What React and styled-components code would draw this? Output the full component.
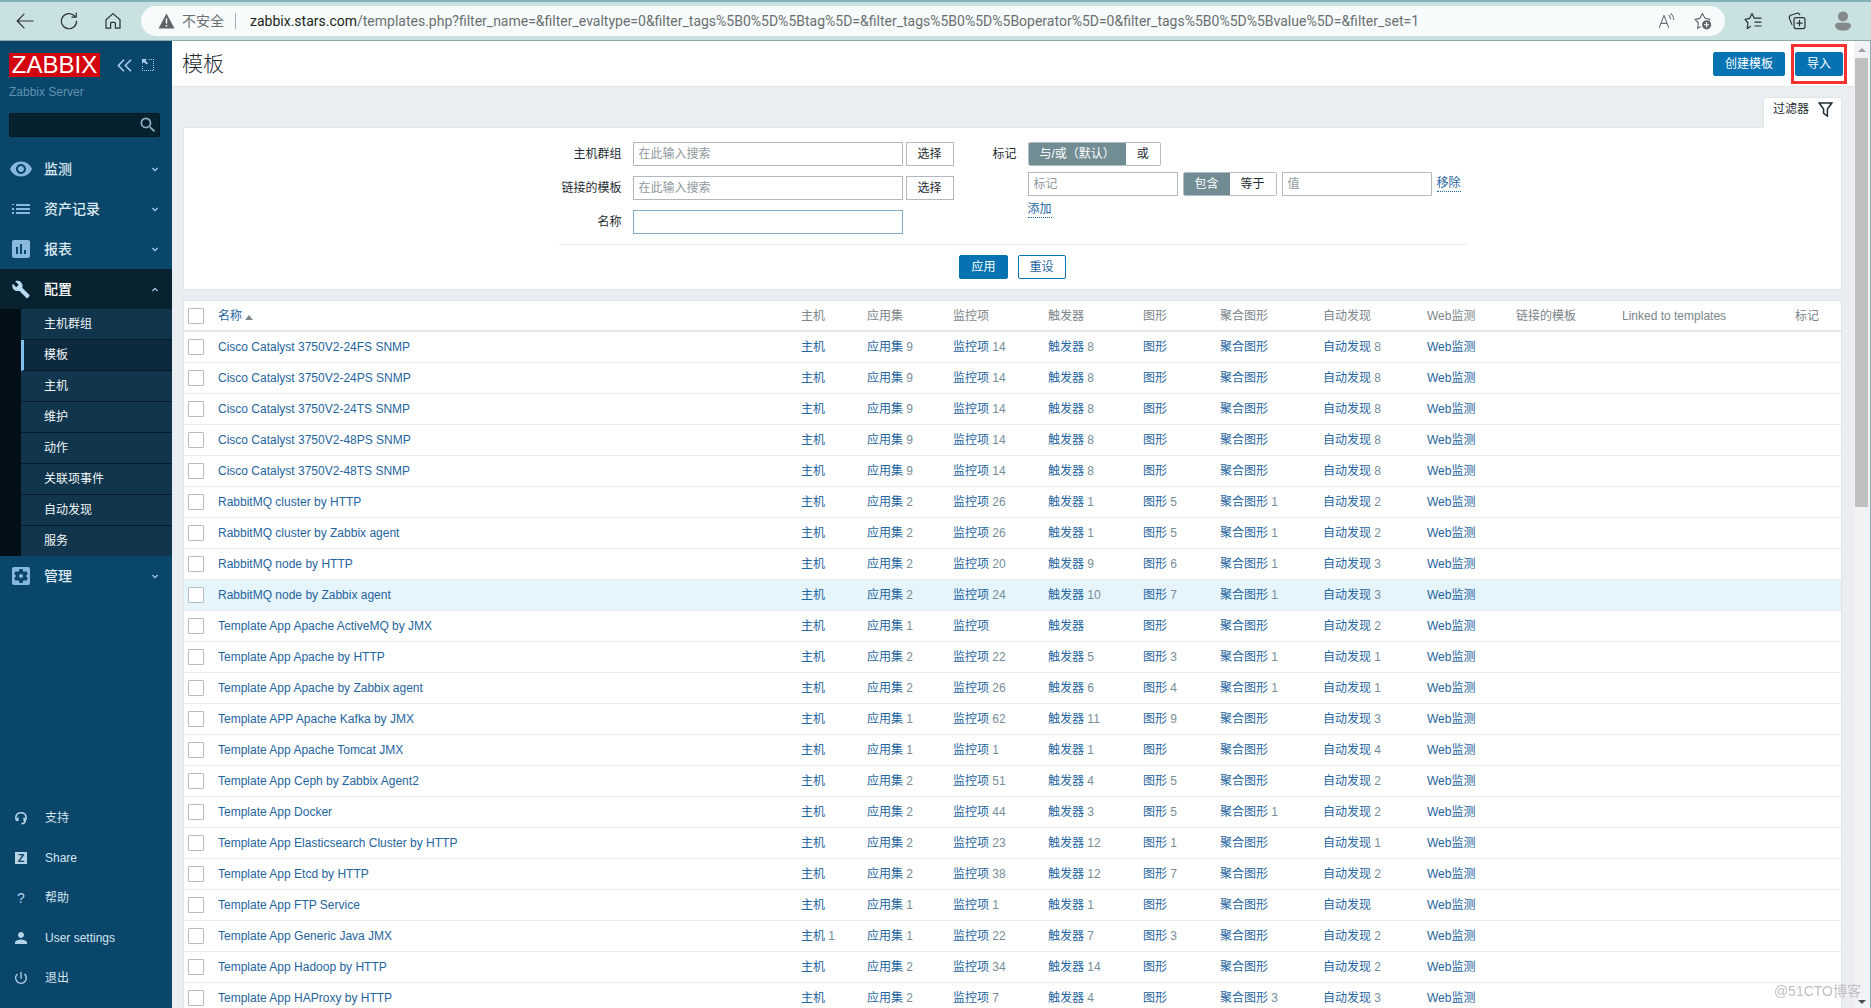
import React from "react";
import styled, { createGlobalStyle } from "styled-components";
import {
  MdVisibility,
  MdAssessment,
  MdBuild,
  MdSettingsApplications,
  MdSearch,
  MdPerson,
  MdPowerSettingsNew,
} from "react-icons/md";

const UI_FONT = `"Liberation Sans", "Noto Sans CJK SC", sans-serif`;

const GlobalStyle = createGlobalStyle`
  *, *::before, *::after { box-sizing: border-box; }
  body {
    margin: 0;
    overflow: hidden;
    background: #ebeef0;
    color: #1f2c33;
    font: 12px/16px ${UI_FONT};
  }
  button, input { font: inherit; color: inherit; margin: 0; }
  a { color: #1f65a0; text-decoration: none; }
`;

/* ---------- window ---------- */

const Window = styled.div`
  display: flex;
  flex-direction: column;
  height: 100vh;
`;

const BrowserBar = styled.header`
  flex: none;
  display: flex;
  align-items: center;
  height: 41px;
  padding: 0 19px 0 16px;
  border-top: 2px solid #82b1b8;
  border-bottom: 1px solid #8da9ab;
  background: #cae1e2;
`;

const BarButton = styled.button`
  flex: none;
  display: flex;
  align-items: center;
  justify-content: center;
  width: 18px;
  height: 18px;
  margin-right: ${(p) => p.$gap || 0}px;
  padding: 0;
  border: 0;
  background: none;
  color: ${(p) => p.$color || "#2a3133"};
`;

const AddressField = styled.div`
  flex: 1;
  min-width: 0;
  display: flex;
  align-items: center;
  height: 30px;
  margin-right: 19px;
  padding: 0 13px 0 17px;
  border-radius: 15px;
  background: #f7fbfb;
  color: #6a7072;
`;

const Insecure = styled.span`
  display: flex;
  align-items: center;
  gap: 7px;
  padding-right: 11px;
  border-right: 1px solid #a4abad;
  font-size: 14px;
  line-height: 16px;
  white-space: nowrap;
`;

const Url = styled.div`
  flex: 1;
  min-width: 0;
  overflow: hidden;
  padding-left: 14px;
  font: 14px/20px Roboto, "Noto Sans", sans-serif;
  white-space: nowrap;

  b {
    font-weight: 400;
    color: #1c1f20;
  }
`;

const Body = styled.div`
  flex: 1;
  min-height: 0;
  display: flex;
  border-right: 1px solid #8db7bd;
`;

/* ---------- sidebar ---------- */

const Sidebar = styled.aside`
  flex: none;
  display: flex;
  flex-direction: column;
  width: 172px;
  background: #0a466a;
  color: #e4edf3;
`;

const Brand = styled.div`
  display: flex;
  align-items: center;
  padding: 12px 18px 0 9px;
  color: #a9cfea;
`;

const Logo = styled.a`
  width: 91px;
  height: 24px;
  margin-right: 17px;
  background: #d30610;
  color: #fff;
  font-size: 24px;
  line-height: 24px;
  text-align: center;
`;

const IconButton = styled.button`
  display: flex;
  padding: 0;
  border: 0;
  background: none;
  color: inherit;
  margin-left: ${(p) => (p.$push ? "auto" : 0)};
`;

const ServerName = styled.div`
  padding: 7px 9px 0;
  color: #5f93b3;
`;

const SearchBox = styled.form`
  display: flex;
  align-items: center;
  height: 24px;
  margin: 13px 12px 12px 9px;
  padding-right: 1px;
  border: 1px solid #04161f;
  border-radius: 2px;
  background: #06222f;
  color: #8fb0c2;

  input {
    flex: 1;
    min-width: 0;
    height: 22px;
    padding: 0 5px;
    border: 0;
    background: none;
    outline: 0;
  }
`;

const MenuLink = styled.a`
  display: flex;
  align-items: center;
  height: 40px;
  padding: 0 14px 0 9px;
  background: ${(p) => (p.$open ? "#08222f" : "none")};
  color: ${(p) => (p.$open ? "#ffffff" : "#dbe9f2")};
  font-size: 14px;
  line-height: 20px;
  font-weight: 500;

  > :first-child {
    flex: none;
    width: 24px;
    height: ${(p) => p.$icon || 24}px;
    margin-right: 11px;
    color: ${(p) => (p.$open ? "#b9dcf3" : "#88b9dc")};
  }
  > :last-child {
    margin-left: auto;
  }
`;

const SubMenu = styled.nav`
  padding-left: 21px;
  background: #020f17;
`;

const SubLink = styled.a`
  display: flex;
  align-items: center;
  height: 31px;
  padding-left: ${(p) => (p.$selected ? 20 : 23)}px;
  border-left: ${(p) => (p.$selected ? "3px solid #7ec0ee" : "0")};
  border-bottom: 1px solid #041b29;
  background: ${(p) => (p.$selected ? "#0d293d" : "#11354c")};
  color: #f0f5f8;

  &:last-child {
    height: 30px;
    border-bottom: 0;
  }
`;

const FooterMenu = styled.nav`
  margin-top: auto;
  padding-bottom: 10px;
`;

const FooterLink = styled.a`
  display: flex;
  align-items: center;
  gap: 15px;
  height: 40px;
  padding-left: 12px;
  color: #d3e4ef;
`;

const FooterIcon = styled.span`
  display: flex;
  align-items: center;
  justify-content: center;
  width: 18px;
  height: 18px;
  color: #b4d3e8;
  font-size: 14px;
`;

const ShareMark = styled.span`
  width: 12px;
  height: 12px;
  background: #b4d3e8;
  color: #0a466a;
  font-size: 11px;
  line-height: 12px;
  font-weight: 700;
  text-align: center;
`;

/* ---------- main ---------- */

const Main = styled.main`
  flex: 1;
  min-width: 0;
  overflow: hidden;
`;

const PageHeader = styled.div`
  display: flex;
  align-items: center;
  gap: 10px;
  height: 46px;
  padding: 0 11px 0 10px;
  border-bottom: 1px solid #e0e5e8;
  background: #fff;
`;

const Title = styled.h1`
  flex: 1;
  margin: 0;
  font-size: 21px;
  line-height: 28px;
  font-weight: 300;
`;

const Button = styled.button`
  position: relative;
  height: 24px;
  padding: 0 11px;
  border: 1px solid #0573b2;
  border-radius: 2px;
  background: ${(p) => (p.$outline ? "#fff" : "#0573b2")};
  color: ${(p) => (p.$outline ? "#1f65a0" : "#fff")};
  line-height: 22px;
`;

const Highlight = styled.span`
  position: absolute;
  inset: -9px -5px;
  border: 3px solid #f8312f;
  pointer-events: none;
`;

const FilterTabs = styled.div`
  display: flex;
  justify-content: flex-end;
  padding: 10px 12px 0;
`;

const FilterTab = styled.button`
  position: relative;
  display: flex;
  align-items: center;
  gap: 9px;
  height: 31px;
  margin-bottom: -1px;
  padding: 0 8px 8px 9px;
  border: 1px solid #dfe4e7;
  border-bottom: 0;
  background: #fff;
`;

const FilterPanel = styled.form`
  display: flex;
  flex-direction: column;
  align-items: center;
  margin: 0 12px 10px 11px;
  padding: 14px 0 10px;
  border: 1px solid #dfe4e7;
  background: #fff;
`;

const FilterBody = styled.div`
  display: flex;
  justify-content: space-between;
  width: 908px;
  padding-bottom: 10px;
  border-bottom: 1px solid #e6eaed;
`;

const FieldGrid = styled.div`
  display: grid;
  grid-template-columns: ${(p) => p.$cols};
  column-gap: 11px;
  row-gap: ${(p) => p.$rowGap}px;
  align-content: start;
`;

const FieldLabel = styled.label`
  line-height: 24px;
  text-align: right;
`;

const Controls = styled.div`
  display: flex;
  align-items: center;
  gap: ${(p) => p.$gap || 3}px;
  height: ${(p) => p.$h || 24}px;
`;

const TextInput = styled.input`
  width: ${(p) => p.$w}px;
  height: 24px;
  padding: 0 5px;
  border: 1px solid ${(p) => (p.$focus ? "#7fa9c4" : "#afb9be")};
  background: #fff;
  outline: 0;

  &::placeholder {
    color: #8f999e;
    opacity: 1;
  }
`;

const SelectButton = styled.button`
  width: 48px;
  height: 24px;
  padding: 0;
  border: 1px solid #afb9be;
  background: #fff;
  line-height: 22px;
`;

const Segments = styled.div`
  display: flex;
  height: 24px;
  border: 1px solid #b4bfc4;
  border-radius: 2px;
  overflow: hidden;
`;

const Segment = styled.label`
  padding: 0 11px;
  background: ${(p) => (p.$on ? "#728c93" : "#fff")};
  color: ${(p) => (p.$on ? "#fff" : "#1f2c33")};
  line-height: 22px;
  white-space: nowrap;

  input {
    position: absolute;
    opacity: 0;
    pointer-events: none;
  }
`;

const DottedLink = styled.a`
  border-bottom: 1px dotted #1f65a0;
  line-height: 15px;
`;

const FilterActions = styled.div`
  display: flex;
  gap: 10px;
  padding-top: 10px;
`;

/* ---------- table ---------- */

const TableFrame = styled.div`
  margin: 0 12px 0 11px;
  border: 1px solid #dfe4e7;
  background: #fff;
`;

const DataTable = styled.table`
  width: 100%;
  border-collapse: separate;
  border-spacing: 0;
  table-layout: fixed;

  th,
  td {
    padding: 0 5px;
    text-align: left;
    white-space: nowrap;
    font-weight: 400;
    vertical-align: middle;
  }
  th {
    height: 31px;
    border-bottom: 2px solid #e3e8ea;
    color: #7b858a;
  }
  td {
    height: 31px;
    border-bottom: 1px solid #ebeef0;
    color: #768d99;
  }
  th:first-child,
  td:first-child {
    padding: 0 0 0 4px;
  }
`;

const Row = styled.tr`
  background: ${(p) => (p.$hover ? "#e6f4fb" : "#fff")};
`;

const Tick = styled.input`
  appearance: none;
  display: block;
  width: 16px;
  height: 16px;
  margin: 0;
  border: 1px solid #b3bcc1;
  border-radius: 1px;
  background: #fff;
`;

const SortArrow = styled.span`
  display: inline-block;
  margin-left: 3px;
  border: 4px solid transparent;
  border-top: 0;
  border-bottom: 5px solid #7b858a;
`;

/* ---------- scroll bar, watermark ---------- */

const ScrollTrack = styled.div`
  flex: none;
  display: flex;
  flex-direction: column;
  align-items: center;
  width: 16px;
  padding: 7px 2px 4px 1px;
  background: #f0f2f4;
`;

const ScrollArrow = styled.span`
  border: 4px solid transparent;
  border-top: ${(p) => (p.$down ? "4px solid #4a4f52" : "0")};
  border-bottom: ${(p) => (p.$down ? "0" : "4px solid #9b9fa1")};
`;

const ScrollThumb = styled.div`
  flex: 0 0 47%;
  width: 100%;
  margin: 6px 0 auto;
  background: #bfc0c0;
`;

const Watermark = styled.div`
  position: fixed;
  right: 10px;
  bottom: 7px;
  color: #bcbfc2;
  font-size: 14px;
  line-height: 20px;
`;

/* ---------- drawings ---------- */

const Line = ({ size = 18, w = 1.2, children, ...rest }) => (
  <svg
    width={size}
    height={size}
    viewBox="0 0 18 18"
    fill="none"
    stroke="currentColor"
    strokeWidth={w}
    strokeLinecap="round"
    strokeLinejoin="round"
    aria-hidden="true"
    {...rest}
  >
    {children}
  </svg>
);

const BackIcon = () => (
  <Line>
    <path d="M17 9H1.5M8 2.2L1.2 9L8 15.8" />
  </Line>
);
const ReloadIcon = () => (
  <Line>
    <path d="M16.6 9.2A7.6 7.6 0 1 1 14.6 4M16.2 1.2V5.2H12" />
  </Line>
);
const HomeIcon = () => (
  <Line>
    <path d="M2 7.8L9 1.6L16 7.8V16.2H11.4V11.4Q11.4 10.4 10.4 10.4H7.6Q6.6 10.4 6.6 11.4V16.2H2Z" />
  </Line>
);
const WarnIcon = () => (
  <svg width="17" height="16" viewBox="0 0 17 16" aria-hidden="true">
    <path d="M8.5 0.5L16.5 15.5H0.5Z" fill="#5e6365" />
    <path d="M8.5 5.5V10.5M8.5 12V13.6" stroke="#fff" strokeWidth="1.5" />
  </svg>
);
const ReadIcon = () => (
  <Line w={1.1}>
    <path d="M1.4 15.4L6 3.4L10.6 15.4M3 11.4H9M11 3.4Q12.4 4.8 12.4 7M13 1.6Q15.6 4 15.6 7.6" />
  </Line>
);
const StarPlusIcon = () => (
  <Line w={1.1}>
    <path d="M6.6 14.6L3.6 16.4L4.4 11L1 7.4L5.8 6.4L8.4 1.6L11 6.2L16 7.2L15.2 8.2" />
    <circle cx="12.6" cy="12.8" r="4.6" fill="#5e6365" stroke="none" />
    <path d="M12.6 10.6V15M10.4 12.8H14.8" stroke="#fff" />
  </Line>
);
const StarListIcon = () => (
  <Line>
    <path d="M6.4 14.4L3.2 16.4L4 11L1 7.4L5.6 6.4L8 1.6L10.2 6.2H17M11 10.2H17M11 14H17" />
  </Line>
);
const CollectionsIcon = () => (
  <Line>
    <rect x="6" y="5.6" width="11" height="11" rx="2" />
    <path d="M11.5 8.4V13.8M8.8 11.1H14.2M3.8 12.4L1.4 6.4Q.8 4 3.2 3L9 1.2Q11 .8 11.8 2.8" />
  </Line>
);
const AvatarIcon = () => (
  <svg width="18" height="20" viewBox="0 0 18 20" fill="#84898b" aria-hidden="true">
    <circle cx="9" cy="5.4" r="5" />
    <path d="M1 15.4Q1 11.8 4.4 11.8H13.6Q17 11.8 17 15.4Q15 19.6 9 19.6T1 15.4Z" />
  </svg>
);
const CollapseIcon = () => (
  <svg width="15" height="13" viewBox="0 0 15 13" fill="none" stroke="currentColor" strokeWidth="1.6" aria-hidden="true">
    <path d="M7 .8L1.4 6.5L7 12.2M14 .8L8.4 6.5L14 12.2" />
  </svg>
);
const KioskIcon = () => (
  <svg width="12" height="12" viewBox="0 0 12 12" fill="currentColor" aria-hidden="true">
    <path d="M0 0H5L3.4 1.6L6 4.2L4.6 5.6L1.8 3L0 5Z" />
    <path d="M7 0h1v1h-1zM9 0h1v1h-1zM11 0h1v1h-1zM11 2h1v1h-1zM11 4h1v1h-1zM11 6h1v1h-1zM11 8h1v1h-1zM11 10h1v1h-1zM0 7h1v1h-1zM0 9h1v1h-1zM0 11h1v1h-1zM2 11h1v1h-1zM4 11h1v1h-1zM6 11h1v1h-1zM8 11h1v1h-1zM10 11h1v1h-1z" />
  </svg>
);
const ListIcon = () => (
  <svg viewBox="0 0 24 24" fill="currentColor" aria-hidden="true">
    <path d="M3 7h2v1H3zM7 7h14v2H7zM3 11h2v2H3zM7 11h14v2H7zM3 15h2v2H3zM7 15h14v2H7z" />
  </svg>
);
const Chevron = ({ up }) => (
  <svg width="6" height="5" viewBox="0 0 6 5" fill="none" stroke="#a9cfea" strokeWidth="1.2" aria-hidden="true">
    <path d={up ? "M.4 4L3 1.4L5.6 4" : "M.4 1L3 3.6L5.6 1"} />
  </svg>
);
const HeadsetIcon = () => (
  <svg width="12" height="13" viewBox="0 0 12 13" fill="none" stroke="currentColor" strokeWidth="1.6" aria-hidden="true">
    <path d="M2 8.6Q.8 7.6 .8 5.8Q1 .8 6 .8T11.2 5.8Q11.2 7.6 10 8.6" />
    <path d="M2.8 5.4V9M9.2 5.4V9M10.4 8.6Q10 11.6 6.4 11.8" />
  </svg>
);
const FunnelIcon = () => (
  <svg width="15" height="15" viewBox="0 0 15 15" fill="none" stroke="#1f2c33" strokeWidth="1.5" aria-hidden="true">
    <path d="M1.2 1H13.8L9.4 7V14L5.6 11.4V7Z" />
  </svg>
);

/* ---------- data ---------- */

const CONFIG_LINKS = ["主机群组", "模板", "主机", "维护", "动作", "关联项事件", "自动发现", "服务"];

const COLUMNS = [
  ["主机", 66],
  ["应用集", 86],
  ["监控项", 95],
  ["触发器", 95],
  ["图形", 77],
  ["聚合图形", 103],
  ["自动发现", 104],
  ["Web监测", 89],
  ["链接的模板", 106],
  ["Linked to templates", 173],
  ["标记", 51],
];
const LINKED_COLUMNS = 8;

const TEMPLATES = [
  ["Cisco Catalyst 3750V2-24FS SNMP", "", 9, 14, 8, "", "", 8],
  ["Cisco Catalyst 3750V2-24PS SNMP", "", 9, 14, 8, "", "", 8],
  ["Cisco Catalyst 3750V2-24TS SNMP", "", 9, 14, 8, "", "", 8],
  ["Cisco Catalyst 3750V2-48PS SNMP", "", 9, 14, 8, "", "", 8],
  ["Cisco Catalyst 3750V2-48TS SNMP", "", 9, 14, 8, "", "", 8],
  ["RabbitMQ cluster by HTTP", "", 2, 26, 1, 5, 1, 2],
  ["RabbitMQ cluster by Zabbix agent", "", 2, 26, 1, 5, 1, 2],
  ["RabbitMQ node by HTTP", "", 2, 20, 9, 6, 1, 3],
  ["RabbitMQ node by Zabbix agent", "", 2, 24, 10, 7, 1, 3],
  ["Template App Apache ActiveMQ by JMX", "", 1, "", "", "", "", 2],
  ["Template App Apache by HTTP", "", 2, 22, 5, 3, 1, 1],
  ["Template App Apache by Zabbix agent", "", 2, 26, 6, 4, 1, 1],
  ["Template APP Apache Kafka by JMX", "", 1, 62, 11, 9, "", 3],
  ["Template App Apache Tomcat JMX", "", 1, 1, 1, "", "", 4],
  ["Template App Ceph by Zabbix Agent2", "", 2, 51, 4, 5, "", 2],
  ["Template App Docker", "", 2, 44, 3, 5, 1, 2],
  ["Template App Elasticsearch Cluster by HTTP", "", 2, 23, 12, 1, "", 1],
  ["Template App Etcd by HTTP", "", 2, 38, 12, 7, "", 2],
  ["Template App FTP Service", "", 1, 1, 1, "", "", ""],
  ["Template App Generic Java JMX", 1, 1, 22, 7, 3, "", 2],
  ["Template App Hadoop by HTTP", "", 2, 34, 14, "", "", 2],
  ["Template App HAProxy by HTTP", "", 2, 7, 4, "", 3, 3],
];
const HOVERED_ROW = 8;

/* ---------- parts ---------- */

function Browser() {
  return (
    <BrowserBar>
      <BarButton $gap={26} aria-label="后退"><BackIcon /></BarButton>
      <BarButton $gap={26} aria-label="刷新"><ReloadIcon /></BarButton>
      <BarButton $gap={19} aria-label="主页"><HomeIcon /></BarButton>
      <AddressField>
        <Insecure><WarnIcon />不安全</Insecure>
        <Url>
          <b>zabbix.stars.com</b>
          /templates.php?filter_name=&amp;filter_evaltype=0&amp;filter_tags%5B0%5D%5Btag%5D=&amp;filter_tags%5B0%5D%5Boperator%5D=0&amp;filter_tags%5B0%5D%5Bvalue%5D=&amp;filter_set=1
        </Url>
        <BarButton $gap={18} $color="#6a7072" aria-label="朗读"><ReadIcon /></BarButton>
        <BarButton $color="#5e6365" aria-label="收藏此页"><StarPlusIcon /></BarButton>
      </AddressField>
      <BarButton $gap={26} aria-label="收藏夹"><StarListIcon /></BarButton>
      <BarButton $gap={28} aria-label="集锦"><CollectionsIcon /></BarButton>
      <BarButton aria-label="个人资料"><AvatarIcon /></BarButton>
    </BrowserBar>
  );
}

function MenuItem({ icon, label, open, iconSize }) {
  return (
    <MenuLink href="#" $open={open} $icon={iconSize}>
      {icon}
      <span>{label}</span>
      <Chevron up={open} />
    </MenuLink>
  );
}

function Navigation() {
  return (
    <Sidebar>
      <Brand>
        <Logo href="#">ZABBIX</Logo>
        <IconButton aria-label="收起"><CollapseIcon /></IconButton>
        <IconButton $push aria-label="全屏"><KioskIcon /></IconButton>
      </Brand>
      <ServerName>Zabbix Server</ServerName>
      <SearchBox role="search">
        <input type="text" aria-label="搜索" />
        <IconButton type="button" aria-label="搜索"><MdSearch size={20} /></IconButton>
      </SearchBox>
      <nav>
        <MenuItem icon={<MdVisibility />} label="监测" />
        <MenuItem icon={<ListIcon />} label="资产记录" />
        <MenuItem icon={<MdAssessment />} label="报表" />
        <MenuItem icon={<MdBuild />} label="配置" open iconSize={19} />
        <SubMenu>
          {CONFIG_LINKS.map((text) => (
            <SubLink href="#" key={text} $selected={text === "模板"}>{text}</SubLink>
          ))}
        </SubMenu>
        <MenuItem icon={<MdSettingsApplications />} label="管理" />
      </nav>
      <FooterMenu>
        <FooterLink href="#"><FooterIcon><HeadsetIcon /></FooterIcon>支持</FooterLink>
        <FooterLink href="#"><FooterIcon><ShareMark>Z</ShareMark></FooterIcon>Share</FooterLink>
        <FooterLink href="#"><FooterIcon>?</FooterIcon>帮助</FooterLink>
        <FooterLink href="#"><FooterIcon><MdPerson size={18} /></FooterIcon>User settings</FooterLink>
        <FooterLink href="#"><FooterIcon><MdPowerSettingsNew size={16} /></FooterIcon>退出</FooterLink>
      </FooterMenu>
    </Sidebar>
  );
}

function Choice({ name, options }) {
  return (
    <Segments role="radiogroup">
      {options.map((text, i) => (
        <Segment key={text} $on={i === 0}>
          <input type="radio" name={name} defaultChecked={i === 0} />
          {text}
        </Segment>
      ))}
    </Segments>
  );
}

function Filter() {
  return (
    <>
      <FilterTabs>
        <FilterTab>过滤器<FunnelIcon /></FilterTab>
      </FilterTabs>
      <FilterPanel>
        <FilterBody>
          <FieldGrid $cols="63px auto" $rowGap={10}>
            <FieldLabel htmlFor="groups">主机群组</FieldLabel>
            <Controls>
              <TextInput id="groups" $w={270} placeholder="在此输入搜索" />
              <SelectButton type="button">选择</SelectButton>
            </Controls>
            <FieldLabel htmlFor="linked">链接的模板</FieldLabel>
            <Controls>
              <TextInput id="linked" $w={270} placeholder="在此输入搜索" />
              <SelectButton type="button">选择</SelectButton>
            </Controls>
            <FieldLabel htmlFor="name">名称</FieldLabel>
            <Controls>
              <TextInput id="name" $w={270} $focus />
            </Controls>
          </FieldGrid>
          <FieldGrid $cols="24px 439px" $rowGap={6}>
            <FieldLabel htmlFor="tag">标记</FieldLabel>
            <Controls>
              <Choice name="evaltype" options={["与/或（默认）", "或"]} />
            </Controls>
            <span />
            <Controls $gap={5}>
              <TextInput id="tag" $w={150} placeholder="标记" />
              <Choice name="operator" options={["包含", "等于"]} />
              <TextInput $w={150} placeholder="值" aria-label="值" />
              <DottedLink href="#">移除</DottedLink>
            </Controls>
            <span />
            <Controls $h={16}>
              <DottedLink href="#">添加</DottedLink>
            </Controls>
          </FieldGrid>
        </FilterBody>
        <FilterActions>
          <Button type="button">应用</Button>
          <Button type="button" $outline>重设</Button>
        </FilterActions>
      </FilterPanel>
    </>
  );
}

function TemplateRow({ template, hover }) {
  const [name, ...counts] = template;
  return (
    <Row $hover={hover}>
      <td><Tick type="checkbox" aria-label={name} /></td>
      <td><a href="#">{name}</a></td>
      {COLUMNS.map(([title], i) => (
        <td key={title}>
          {i < LINKED_COLUMNS && <><a href="#">{title}</a> {counts[i]}</>}
        </td>
      ))}
    </Row>
  );
}

function TemplateTable() {
  return (
    <TableFrame>
      <DataTable>
        <colgroup>
          <col width="29" />
          <col />
          {COLUMNS.map(([title, width]) => <col key={title} width={width} />)}
        </colgroup>
        <thead>
          <tr>
            <th><Tick type="checkbox" aria-label="全选" /></th>
            <th><a href="#">名称<SortArrow /></a></th>
            {COLUMNS.map(([title]) => <th key={title}>{title}</th>)}
          </tr>
        </thead>
        <tbody>
          {TEMPLATES.map((template, i) => (
            <TemplateRow key={template[0]} template={template} hover={i === HOVERED_ROW} />
          ))}
        </tbody>
      </DataTable>
    </TableFrame>
  );
}

export default function App() {
  return (
    <Window>
      <GlobalStyle />
      <Browser />
      <Body>
        <Navigation />
        <Main>
          <PageHeader>
            <Title>模板</Title>
            <Button>创建模板</Button>
            <Button>导入<Highlight /></Button>
          </PageHeader>
          <Filter />
          <TemplateTable />
        </Main>
        <ScrollTrack aria-hidden="true">
          <ScrollArrow />
          <ScrollThumb />
          <ScrollArrow $down />
        </ScrollTrack>
      </Body>
      <Watermark>@51CTO博客</Watermark>
    </Window>
  );
}
